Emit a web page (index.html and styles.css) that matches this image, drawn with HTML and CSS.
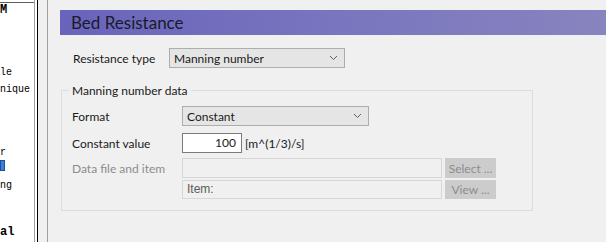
FILE: index.html
```html
<!DOCTYPE html>
<html>
<head>
    <link rel="stylesheet" href="styles.css">
</head>
<body>

<div class="tree">
    <div class="tree-head"></div>
    <div class="node bold n1">M</div>
    <div class="node n2">le</div>
    <div class="node n3">nique</div>
    <div class="node n4">r</div>
    <div class="node n5"><span class="sel-icon"></span></div>
    <div class="node n6">ng</div>
    <div class="node bold n7">al</div>
</div>
<div class="gap"></div>
<div class="splitter"></div>

<div class="main">
    <h1 class="title">Bed Resistance</h1>

    <div class="row top-row">
        <label class="label wide">Resistance type</label>
        <div class="combo combo-type">
            <span>Manning number</span>
            <svg class="chev" width="9" height="6" viewBox="0 0 9 6"><polyline points="1,1 4.5,4.5 8,1" fill="none" stroke="#606060" stroke-width="1"/></svg>
        </div>
    </div>

    <fieldset class="group">
        <legend>Manning number data</legend>

        <div class="row r-format">
            <label class="label">Format</label>
            <div class="combo combo-format">
                <span>Constant</span>
                <svg class="chev" width="9" height="6" viewBox="0 0 9 6"><polyline points="1,1 4.5,4.5 8,1" fill="none" stroke="#606060" stroke-width="1"/></svg>
            </div>
        </div>

        <div class="row r-const">
            <label class="label">Constant value</label>
            <div class="num">100</div>
            <span class="unit">[m^(1/3)/s]</span>
        </div>

        <div class="row r-file">
            <label class="label off">Data file and item</label>
            <div class="field"></div>
            <button class="btn">Select ...</button>
        </div>

        <div class="row r-item">
            <span class="label"></span>
            <div class="field item">Item:</div>
            <button class="btn">View ...</button>
        </div>
    </fieldset>
</div>

</body>
</html>
```

FILE: styles.css
```css
* {
    box-sizing: border-box;
}

html, body {
    margin: 0;
    height: 242px;
    overflow: hidden;
}

body {
    display: flex;
    background-color: #f0f0f0;
    font-family: 'Lato', sans-serif;
    font-size: 12px;
    color: #1a1a1a;
}

/* left tree */
.tree {
    width: 35px;
    background-color: #fff;
    border-right: 1px solid #a0a0a0;
    font-family: 'Liberation Mono', monospace;
    font-size: 10px;
    color: #000;
    overflow: hidden;
}

.tree-head {
    height: 3px;
    border-bottom: 1px solid #606060;
}

.node {
    height: 12px;
    line-height: 12px;
    white-space: nowrap;
}

.bold {
    font-weight: bold;
    font-size: 12px;
}

.n1 { margin-top: 1px; }
.n2 { margin-top: 51px; }
.n3 { margin-top: 5px; }
.n4 { margin-top: 51px; }
.n5 { margin-top: 1px; }
.n6 { margin-top: 8px; }
.n7 { margin-top: 34px; }

.sel-icon {
    display: inline-block;
    width: 5px;
    height: 11px;
    background-color: #3c7fd6;
    border: 1px solid #1d4f9a;
}

.gap {
    width: 2px;
    background-color: #fff;
}

.splitter {
    width: 11px;
    border-left: 1px solid #000;
    border-right: 1px solid #a0a0a0;
    background-color: #f0f0f0;
}

/* main panel */
.main {
    flex: 1;
    padding: 10px 0 0 12px;
}

.title {
    margin: 0;
    height: 25px;
    padding-left: 11px;
    background: linear-gradient(to right, #6964bb, #7c78bf 60%, #8884bf);
    font-size: 17px;
    font-weight: normal;
    line-height: 25px;
    color: #1a1a2a;
}

.row {
    display: flex;
    align-items: center;
}

.label {
    width: 110px;
    flex: none;
}

.label.wide {
    width: 96px;
}

.off {
    color: #8c8c8c;
}

.top-row {
    margin: 13px 0 0 13px;
}

.combo {
    display: flex;
    align-items: center;
    justify-content: space-between;
    height: 20px;
    padding: 0 6px 0 4px;
    background-color: #e5e5e5;
    border: 1px solid #adadad;
}

.combo-type {
    width: 176px;
}

.combo-format {
    width: 187px;
}

.group {
    width: 472px;
    margin: 15px 0 0 1px;
    padding: 0 10px 11px 10px;
    border: 1px solid #dcdcdc;
}

.group legend {
    padding: 0 3px;
    margin-left: -3px;
}

.r-format {
    margin-top: 8px;
}

.r-const {
    margin-top: 7px;
}

.num {
    width: 60px;
    height: 20px;
    padding-right: 5px;
    background-color: #fff;
    border: 1px solid #7a7a7a;
    text-align: right;
    line-height: 18px;
}

.unit {
    margin-left: 3px;
}

.r-file {
    margin-top: 5px;
}

.r-item {
    margin-top: 2px;
}

.field {
    width: 260px;
    height: 20px;
    border: 1px solid #d6d6d6;
    background-color: #f0f0f0;
}

.field.item {
    height: 19px;
    padding-left: 4px;
    line-height: 17px;
    font-family: 'Liberation Sans', sans-serif;
    color: #5a5a5a;
}

.r-item .btn {
    height: 19px;
}

.btn {
    width: 51px;
    height: 20px;
    margin-left: 3px;
    padding: 0;
    border: none;
    background-color: #cccccc;
    font-family: 'Lato', sans-serif;
    font-size: 12px;
    color: #8c8c8c;
}
```
